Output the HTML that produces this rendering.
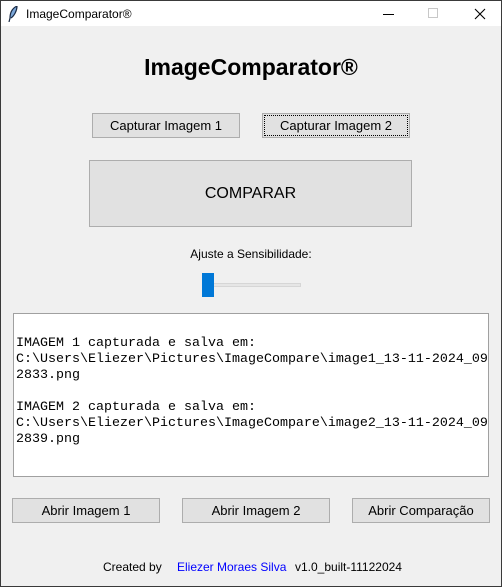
<!DOCTYPE html>
<html><head><meta charset="utf-8"><style>
*{box-sizing:border-box;margin:0;padding:0}
body{width:502px;height:587px;background:#f0f0f0;font-family:"Liberation Sans",sans-serif;position:relative;overflow:hidden;border:1px solid #3a3a3a}
.abs{position:absolute}
.title{left:0;top:0;width:500px;height:25px;background:#fff}
.btn{position:absolute;background:#e1e1e1;border:1px solid #adadad;font-size:13px;color:#000;display:flex;align-items:center;justify-content:center}
.txt{left:12px;top:312px;width:476px;height:164px;background:#fff;border:1px solid #a0a0a0;font-family:"Liberation Mono",monospace;font-size:13.33px;line-height:16px;padding:6px 0 0 2px;white-space:pre;overflow:hidden;color:#000}
</style></head><body>
<div class="abs title"></div>
<svg class="abs" style="left:7px;top:5px" width="10" height="16" viewBox="0 0 10 16"><path d="M9 0 C5 2 2 6 2 12 L1 16 M9 0 C9 5 6 10 3 12" fill="#7aa6d8" stroke="#1a2a44" stroke-width="1.2"/></svg>
<div class="abs" style="left:25px;top:6px;font-size:12px">ImageComparator®</div>
<div class="abs" style="left:382px;top:13px;width:11px;height:1px;background:#000"></div>
<div class="abs" style="left:427px;top:7px;width:10px;height:10px;border:1px solid #c8c8c8"></div>
<svg class="abs" style="left:473px;top:7px" width="12" height="12"><path d="M1 1L11 11M11 1L1 11" stroke="#000" stroke-width="1.1"/></svg>
<div class="abs" style="left:0;width:500px;top:53px;text-align:center;font-size:23px;font-weight:bold">ImageComparator®</div>
<div class="btn" style="left:91px;top:112px;width:148px;height:25px">Capturar Imagem 1</div>
<div class="btn" style="left:261px;top:112px;width:148px;height:25px;outline:1px dotted #000;outline-offset:-3px">Capturar Imagem 2</div>
<div class="btn" style="left:88px;top:159px;width:323px;height:67px;font-size:16px">COMPARAR</div>
<div class="abs" style="left:0;width:500px;top:246px;text-align:center;font-size:12px">Ajuste a Sensibilidade:</div>
<div class="abs" style="left:212px;top:282px;width:88px;height:4px;background:#e6e6e6;border:1px solid #d6d6d6"></div>
<div class="abs" style="left:201px;top:272px;width:12px;height:24px;background:#0078d7"></div>
<div class="abs txt">
IMAGEM 1 capturada e salva em:
C:\Users\Eliezer\Pictures\ImageCompare\image1_13-11-2024_09
2833.png

IMAGEM 2 capturada e salva em:
C:\Users\Eliezer\Pictures\ImageCompare\image2_13-11-2024_09
2839.png</div>
<div class="btn" style="left:11px;top:497px;width:148px;height:25px">Abrir Imagem 1</div>
<div class="btn" style="left:181px;top:497px;width:148px;height:25px">Abrir Imagem 2</div>
<div class="btn" style="left:351px;top:497px;width:138px;height:25px">Abrir Comparação</div>
<div class="abs" style="left:102px;top:559px;font-size:12px">Created by</div>
<div class="abs" style="left:176px;top:559px;font-size:12px;color:#0000ff">Eliezer Moraes Silva</div>
<div class="abs" style="left:294px;top:559px;font-size:12px">v1.0_built-11122024</div>
</body></html>
